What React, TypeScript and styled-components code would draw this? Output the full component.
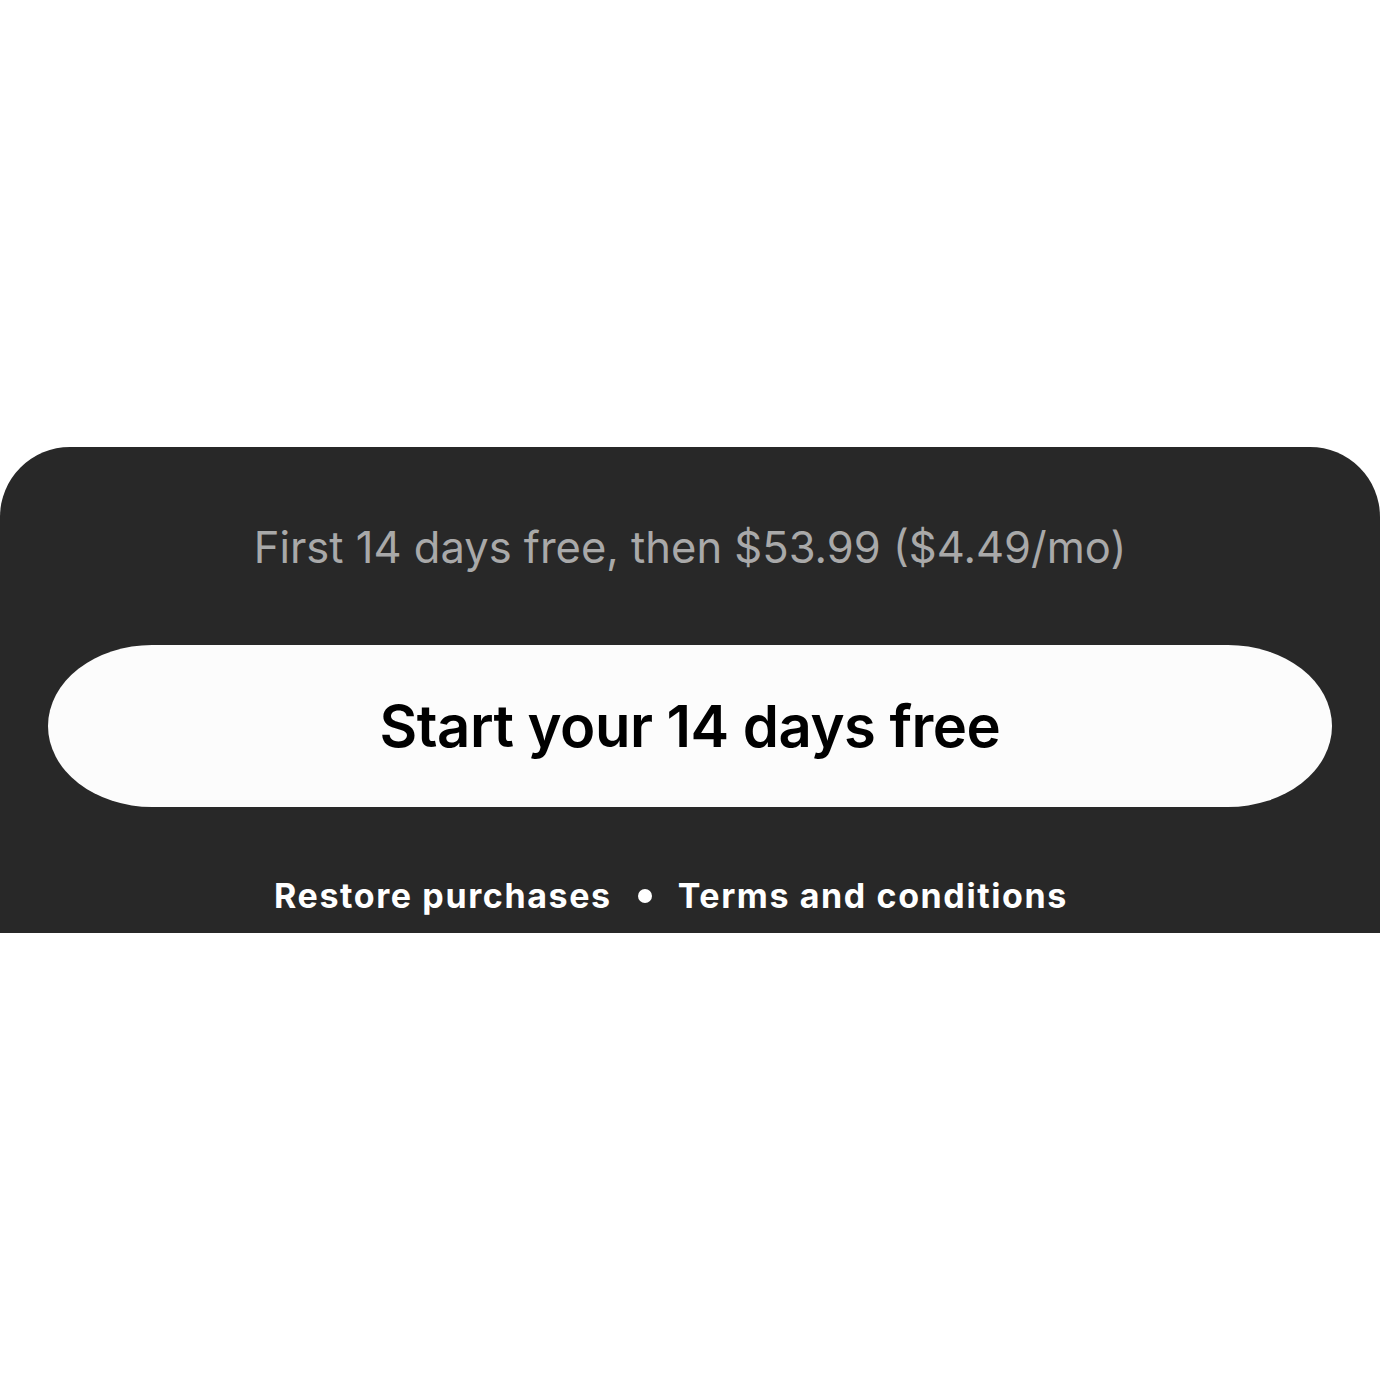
import React from "react";
import styled, { createGlobalStyle } from "styled-components";

const GlobalStyle = createGlobalStyle`
  html, body {
    margin: 0;
    padding: 0;
    background: #ffffff;
  }
  body {
    font-family: Inter, "Noto Sans", sans-serif;
    -webkit-font-smoothing: antialiased;
  }
`;

const Page = styled.div`
  width: 1380px;
  height: 1380px;
  display: flex;
  flex-direction: column;
  padding-top: 447px;
  box-sizing: border-box;
`;

const Sheet = styled.div`
  background: #282828;
  height: 486px;
  border-radius: 70px 70px 0 0;
  display: flex;
  flex-direction: column;
  align-items: center;
  padding: 0 48px;
  box-sizing: border-box;
  overflow: hidden;
`;

const PriceNote = styled.div`
  margin-top: 73px;
  height: 54px;
  line-height: 54px;
  font-size: 43.5px;
  font-weight: 400;
  color: #a9a9a9;
`;

const CtaButton = styled.button`
  margin-top: 71px;
  width: 100%;
  height: 162px;
  border: none;
  border-radius: 104px / 81px;
  background: #fcfcfc;
  color: #000000;
  font-family: Inter, "Noto Sans", sans-serif;
  font-size: 58px;
  font-weight: 600;
  letter-spacing: -0.5px;
  cursor: pointer;
`;

const Links = styled.div`
  margin-top: 68px;
  margin-right: 38px;
  display: flex;
  align-items: center;
  gap: 26px;
  font-size: 34px;
  font-weight: 700;
  letter-spacing: 1.6px;
  color: #ffffff;
`;

const LinkText = styled.span`
  line-height: 42px;
`;

const Dot = styled.span`
  width: 14px;
  height: 14px;
  border-radius: 50%;
  background: #ffffff;
`;

export default function App() {
  return (
    <>
      <GlobalStyle />
      <Page>
        <Sheet>
          <PriceNote>First 14 days free, then $53.99 ($4.49/mo)</PriceNote>
          <CtaButton>Start your 14 days free</CtaButton>
          <Links>
            <LinkText>Restore purchases</LinkText>
            <Dot />
            <LinkText>Terms and conditions</LinkText>
          </Links>
        </Sheet>
      </Page>
    </>
  );
}
